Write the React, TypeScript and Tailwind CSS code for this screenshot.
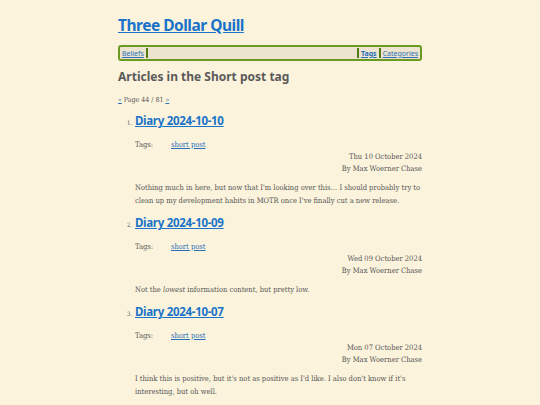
import React from 'react';

const posts = [
  {
    id: '1',
    title: 'Diary 2024-10-10',
    date: 'Thu 10 October 2024',
    body: (
      <>Nothing much in here, but now that I'm looking over this… I should probably try to clean up my development habits in MOTR once I've finally cut a new release.</>
    ),
  },
  {
    id: '2',
    title: 'Diary 2024-10-09',
    date: 'Wed 09 October 2024',
    body: (
      <>Not the <em>lowest</em> information content, but pretty low.</>
    ),
  },
  {
    id: '3',
    title: 'Diary 2024-10-07',
    date: 'Mon 07 October 2024',
    body: (
      <>I think this is positive, but it's not as positive as I'd like. I also don't know if it's interesting, but oh well.</>
    ),
  },
];

const sans = "font-['Noto_Sans','Open_Sans',sans-serif]";
const serif = "font-['DejaVu_Serif','Liberation_Serif',serif] font-stretch-condensed";

export default function App() {
  return (
    <div className="min-h-[405px] bg-[#fbf3dc] text-[#585858]">
      <div className="mx-auto w-[304px] pt-[14px]">
        <h1 className={`${sans} text-[15.5px] font-bold leading-[22px] tracking-[-0.5px]`}>
          <a href="#" className="text-[#1a73c9] underline">Three Dollar Quill</a>
        </h1>

        <nav className={`${sans} mt-[9px] flex h-[16px] items-center rounded-[3px] border-2 border-[#6b9a22] bg-[#ece4cf] px-[2px] text-[7px] leading-none`}>
          <a href="#" className="text-[#2a6fb8] underline">Beliefs</a>
          <span className="ml-[2px] h-[10px] w-[2px] bg-[#4f7d14]" />
          <span className="flex-1" />
          <span className="mr-[2px] h-[10px] w-[2px] bg-[#4f7d14]" />
          <a href="#" className="font-bold text-[#2a6fb8] underline">Tags</a>
          <span className="mx-[2px] h-[10px] w-[2px] bg-[#4f7d14]" />
          <a href="#" className="text-[#2a6fb8] underline">Categories</a>
        </nav>

        <h2 className={`${sans} mt-[7px] text-[12px] font-bold leading-[18px] text-[#5a5a5a]`}>
          Articles in the Short post tag
        </h2>

        <p className={`${serif} mt-[9px] text-[7px] leading-[10px]`}>
          <a href="#" className="text-[#2a6fb8] underline">«</a> Page 44 / 81{' '}
          <a href="#" className="text-[#2a6fb8] underline">»</a>
        </p>

        <ol className="mt-[7px] pl-[17px]">
          {posts.map((post, i) => (
            <li key={post.id} className="mb-[7px]">
              <div className="flex items-baseline">
                <span className={`${serif} -ml-[8px] w-[8px] text-[6px]`}>{i + 1}.</span>
                <a href="#" className={`${sans} text-[11.5px] font-bold leading-[18px] tracking-[-0.3px] text-[#1a73c9] underline`}>
                  {post.title}
                </a>
              </div>
              <div className={`${serif} mt-[9px] text-[7.5px] leading-[12px]`}>
                <div className="flex">
                  <span className="w-[36px]">Tags:</span>
                  <a href="#" className="text-[#2a6fb8] underline">short post</a>
                </div>
                <div className="text-right">{post.date}</div>
                <div className="text-right">By Max Woerner Chase</div>
                <p className="mt-[6px] leading-[13px]">{post.body}</p>
              </div>
            </li>
          ))}
        </ol>
      </div>
    </div>
  );
}
